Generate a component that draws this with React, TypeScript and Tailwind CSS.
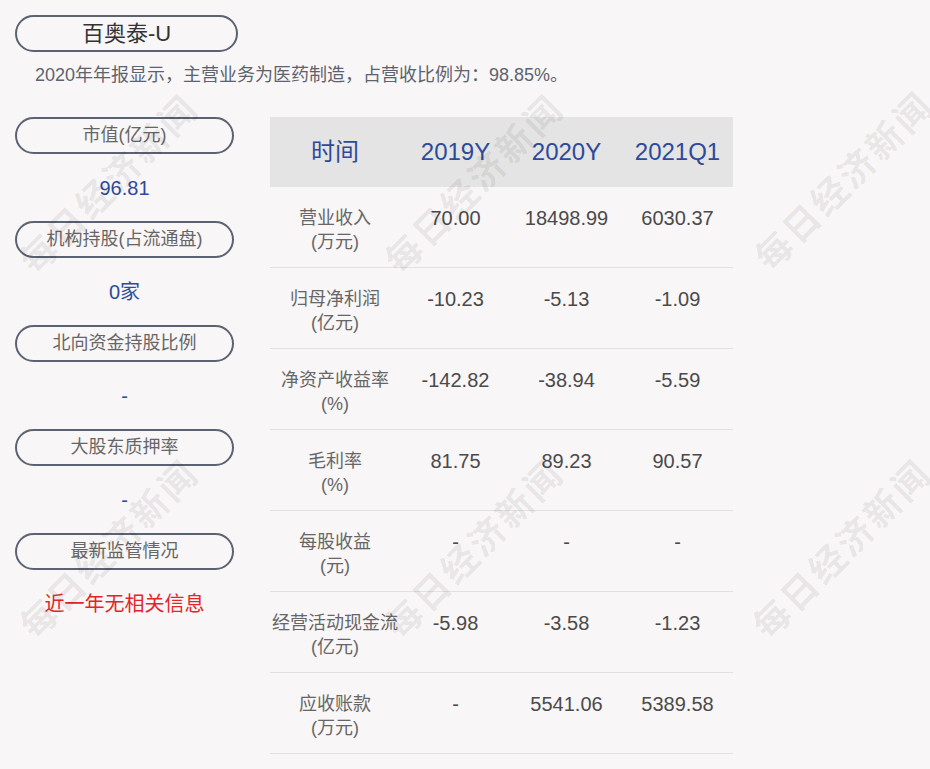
const FONT = "font-['Liberation_Sans','Noto_Sans_CJK_SC',sans-serif]";

const SIDE: { label: string; value: string; red?: boolean }[] = [
  { label: '市值(亿元)', value: '96.81' },
  { label: '机构持股(占流通盘)', value: '0家' },
  { label: '北向资金持股比例', value: '-' },
  { label: '大股东质押率', value: '-' },
  { label: '最新监管情况', value: '近一年无相关信息', red: true },
];

const ROWS: { name: string; unit: string; vals: [string, string, string] }[] = [
  { name: '营业收入', unit: '(万元)', vals: ['70.00', '18498.99', '6030.37'] },
  { name: '归母净利润', unit: '(亿元)', vals: ['-10.23', '-5.13', '-1.09'] },
  { name: '净资产收益率', unit: '(%)', vals: ['-142.82', '-38.94', '-5.59'] },
  { name: '毛利率', unit: '(%)', vals: ['81.75', '89.23', '90.57'] },
  { name: '每股收益', unit: '(元)', vals: ['-', '-', '-'] },
  { name: '经营活动现金流', unit: '(亿元)', vals: ['-5.98', '-3.58', '-1.23'] },
  { name: '应收账款', unit: '(万元)', vals: ['-', '5541.06', '5389.58'] },
];

// watermark centres
const MARKS = [
  'left-[110px] top-[185px]',
  'left-[475px] top-[185px]',
  'left-[845px] top-[182px]',
  'left-[110px] top-[550px]',
  'left-[475px] top-[550px]',
  'left-[843px] top-[550px]',
];

export default function App() {
  return (
    <div className={`relative min-h-screen w-full overflow-hidden bg-[#f9f6f7] pl-[15px] pt-[15px] pb-4 ${FONT}`}>
      {/* Title */}
      <div className="flex h-[37px] w-[223px] items-center justify-center rounded-full border-2 border-[#5b6271] text-[22px] text-[#333]">
        百奥泰-U
      </div>
      <p className="ml-[20px] mt-[11px] text-[18px] leading-6 text-[#5d636e]">
        2020年年报显示，主营业务为医药制造，占营收比例为：98.85%。
      </p>

      <div className="mt-[30px] flex items-start gap-[36px]">
        {/* Left column */}
        <div className="flex w-[219px] flex-col">
          {SIDE.map((s) => (
            <div key={s.label} className="flex flex-col">
              <div className="flex h-[37px] items-center justify-center rounded-full border-2 border-[#5b6271] text-[18px] text-[#666]">
                {s.label}
              </div>
              <div
                className={`flex h-[67px] items-center justify-center text-[20px] ${
                  s.red ? 'text-[#e2252b]' : 'text-[#2d4a9a]'
                }`}
              >
                {s.value}
              </div>
            </div>
          ))}
        </div>

        {/* Table */}
        <div className="w-[463px]">
          <div className="grid h-[70px] grid-cols-[130px_111px_111px_111px] items-center bg-[#e4e4e4] text-center text-[24px] text-[#2d4a9a]">
            <span>时间</span>
            <span>2019Y</span>
            <span>2020Y</span>
            <span>2021Q1</span>
          </div>
          {ROWS.map((r) => (
            <div
              key={r.name}
              className="grid h-[81px] grid-cols-[130px_111px_111px_111px] border-b border-[#e2e0e1] pt-[19px] text-center"
            >
              <div className="flex flex-col text-[18px] leading-6 text-[#666]">
                <span>{r.name}</span>
                <span>{r.unit}</span>
              </div>
              {r.vals.map((v, i) => (
                <span key={i} className="text-[20px] leading-6 text-[#4a4a4a]">
                  {v}
                </span>
              ))}
            </div>
          ))}
        </div>
      </div>

      {/* Watermarks */}
      <div className="pointer-events-none absolute inset-0">
        {MARKS.map((m, i) => (
          <span
            key={i}
            className={`absolute ${m} -translate-x-1/2 -translate-y-1/2 -rotate-45 whitespace-nowrap text-[36px] font-bold tracking-[3px] text-black/[0.08]`}
          >
            每日经济新闻
          </span>
        ))}
      </div>
    </div>
  );
}
